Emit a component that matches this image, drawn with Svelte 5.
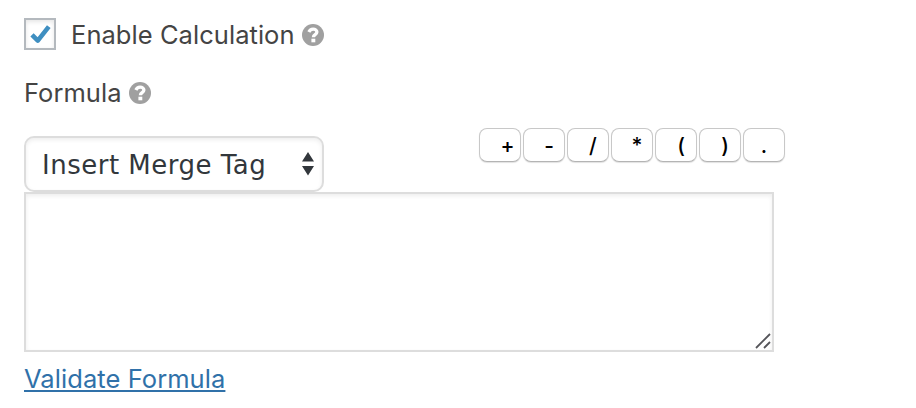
<script>
const operators = ['+', '-', '/', '*', '(', ')', '.']

let enabled = $state(true)
let formula = $state('')

function insertOperator(operator) {
	formula += operator
}
</script>

{#snippet helpIcon()}
	<svg class="help" viewBox="0 0 22 22" aria-hidden="true">
		<circle cx="11" cy="11" r="11" fill="#a0a0a0" />
		<path d="M6.9 8C7.6 6.3 9 5.2 11.1 5.2c2.2 0 3.8 1.2 3.8 2.9 0 2.7-3.5 2.5-3.5 5.1" fill="none" stroke="#fff" stroke-width="3.3" />
		<rect x="9.4" y="14.7" width="3.9" height="3.6" fill="#fff" />
	</svg>
{/snippet}

<main>
	<div class="row enable">
		<button class="checkbox" role="checkbox" aria-checked={enabled} aria-label="Enable Calculation" onclick={() => (enabled = !enabled)}>
			{#if enabled}
				<svg width="28" height="28" viewBox="0 0 28 28">
					<path d="M6 14.8L11.8 20.6 22.8 6.6" fill="none" stroke="#3f8fc1" stroke-width="4.6" stroke-linejoin="round" />
				</svg>
			{/if}
		</button>
		<span class="label enable-label">Enable Calculation</span>
		{@render helpIcon()}
	</div>

	<div class="row formula">
		<span class="label formula-label">Formula</span>
		{@render helpIcon()}
	</div>

	<div class="toolbar">
		<button class="select">
			<span>Insert Merge Tag</span>
			<svg width="12" height="24" viewBox="0 0 12 24">
				<path d="M0 9.5L6 0l6 9.5zM0 14h12l-6 9.5z" fill="#32373c" />
			</svg>
		</button>
		<div class="operators">
			{#each operators as operator}
				<button class="operator" class:plus={operator === '+'} class:dot={operator === '.'} onclick={() => insertOperator(operator)}>{operator}</button>
			{/each}
		</div>
	</div>

	<div class="editor">
		<textarea bind:value={formula} aria-label="Formula"></textarea>
		<svg class="grip" width="16" height="16" viewBox="0 0 16 16">
			<path d="M1 15L15 1M9 15l6-6" stroke="#55555a" stroke-width="1.8" />
		</svg>
	</div>
	<a href="#validate">Validate Formula</a>
</main>

<style>
	:global(body) {
		margin: 0;
		background: #fff;
	}
	main {
		box-sizing: border-box;
		width: 916px;
		height: 408px;
		padding: 18px 24px 0;
		overflow: hidden;
		font-family: Inter, "Liberation Sans", sans-serif;
		font-size: 25.5px;
		color: #444;
	}
	button {
		box-sizing: border-box;
		margin: 0;
		padding: 0;
		background: #fff;
	}
	.row {
		display: flex;
		align-items: center;
	}
	.enable {
		height: 32px;
	}
	.formula {
		height: 32px;
		margin-top: 27px;
	}
	.label {
		line-height: 32px;
		letter-spacing: 0.05px;
		white-space: nowrap;
	}
	.enable-label {
		width: 223px;
		margin: 2px 8px 0 15px;
	}
	.formula-label {
		width: 98px;
		margin-right: 7px;
	}
	.help {
		width: 22px;
		height: 22px;
		flex: none;
	}
	.enable .help {
		margin-top: 1px;
	}
	.checkbox {
		width: 32px;
		height: 32px;
		border: 2px solid #b4b9be;
		box-shadow: inset 0 2px 4px rgba(0, 0, 0, 0.1);
	}
	.checkbox svg {
		display: block;
	}
	.toolbar {
		display: flex;
		margin-top: 27px;
	}
	.select {
		display: flex;
		align-items: center;
		justify-content: space-between;
		width: 300px;
		height: 56px;
		padding: 0 8px 0 16px;
		border: 2px solid #ddd;
		border-radius: 10px;
		box-shadow: inset 0 2px 4px rgba(0, 0, 0, 0.07);
		font-family: "DejaVu Sans", Verdana, sans-serif;
		font-size: 26px;
		letter-spacing: 0.5px;
		color: #32373c;
		white-space: nowrap;
	}
	.select span {
		padding-top: 2px;
	}
	.operators {
		display: flex;
		gap: 2px;
		margin: -8px 0 0 155px;
	}
	.operator {
		width: 42px;
		height: 34px;
		padding: 1px 0 0 10px;
		border: 1px solid #c8c8c8;
		border-bottom-color: #b4b4b4;
		border-radius: 8px;
		box-shadow: 0 1px 1px rgba(0, 0, 0, 0.12);
		font: 500 21px/28px Inter, sans-serif;
		color: #000;
	}
	.plus {
		padding-left: 15px;
	}
	.dot {
		padding-left: 0;
	}
	.editor {
		position: relative;
		width: 750px;
		height: 160px;
	}
	textarea {
		display: block;
		box-sizing: border-box;
		width: 100%;
		height: 100%;
		margin: 0;
		padding: 4px 12px;
		border: 2px solid #ddd;
		box-shadow: inset 0 2px 4px rgba(0, 0, 0, 0.07);
		font: inherit;
		resize: none;
		outline: none;
	}
	.grip {
		position: absolute;
		right: 3px;
		bottom: 3px;
	}
	a {
		display: inline-block;
		margin-top: 11px;
		line-height: 32px;
		letter-spacing: 0.07px;
		color: #3071a9;
		text-decoration-thickness: 2px;
		text-underline-offset: 2px;
		text-decoration-skip-ink: none;
	}
</style>
